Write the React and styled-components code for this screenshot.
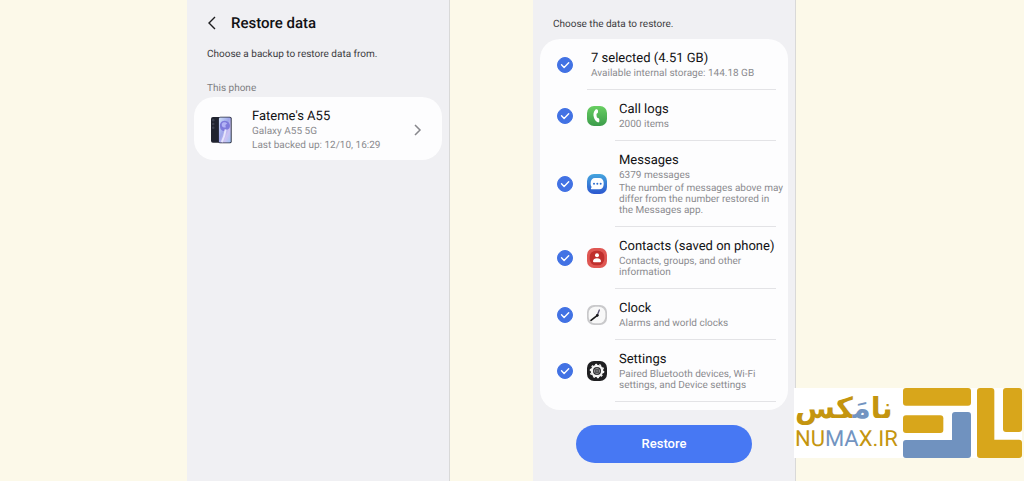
import React from "react";
import styled, { createGlobalStyle } from "styled-components";

const GlobalStyle = createGlobalStyle`
  * {
    box-sizing: border-box;
    margin: 0;
    padding: 0;
  }

  body {
    background-color: #fcf9e9;
    font-family: Roboto, "Liberation Sans", sans-serif;
    text-rendering: geometricPrecision;
    color: #111113;
  }
`;

const Page = styled.main`
  position: relative;
  min-height: 100vh;
  display: grid;
  grid-template-columns: 187fr 263fr 83fr 263fr 228fr;
`;

const Phone = styled.section`
  grid-column: ${({ $column }) => $column};
  display: flex;
  flex-direction: column;
  padding: ${({ $top }) => $top}px 7px 18px;
  background-color: #f0f0f3;
  border-right: 1px solid #d9d9d8;
`;

const TitleBar = styled.header`
  display: flex;
  align-items: center;
  gap: 14px;
  padding-left: 13px;

  h1 {
    font-size: 15px;
    line-height: 20px;
    font-weight: 500;
  }
`;

const BackButton = styled.button`
  display: flex;
  border: none;
  background: none;
  cursor: pointer;
`;

const Intro = styled.p`
  padding-left: 13px;
  margin-top: ${({ $gap }) => $gap || 0}px;
  font-size: 10px;
  line-height: 14px;
  color: #3b3b3e;
`;

const GroupLabel = styled.h2`
  padding-left: 13px;
  margin: 20px 0 1px;
  font-size: 10px;
  line-height: 14px;
  font-weight: 400;
  color: #7e7e82;
`;

const Card = styled.div`
  border-radius: 20px;
  background-color: #fdfdfe;
`;

const BackupLink = styled.a`
  display: flex;
  align-items: center;
  padding: 11px 20px 8px 17px;
  color: inherit;
  text-decoration: none;
`;

const BackupText = styled.div`
  flex: 1;
  padding-left: 20px;
`;

const ItemTitle = styled.span`
  display: block;
  font-size: 13px;
  line-height: 18px;
  color: #111113;
`;

const ItemNote = styled.span`
  display: block;
  margin-right: -8px;
  font-size: 10px;
  line-height: ${({ $loose }) => ($loose ? 12 : 11)}px;
  color: #8b8b8f;

  & + & {
    margin-top: 2px;
  }
`;

const DataCard = styled(Card)`
  margin-top: 7px;
  padding: 0 12px 8px 17px;
`;

const DataList = styled.ul`
  list-style: none;
`;

const DataRow = styled.label`
  display: flex;
  align-items: center;
  cursor: pointer;
`;

const CheckBox = styled.span`
  flex: none;
  display: grid;
  width: 16px;
  height: 16px;
  margin-right: 14px;

  input,
  svg {
    grid-area: 1 / 1;
    width: 100%;
    height: 100%;
  }

  input {
    appearance: none;
    border: 1px solid #9a9aa0;
    border-radius: 50%;
    cursor: pointer;
  }

  input:checked {
    border-color: #4272e4;
    background-color: #4272e4;
  }

  svg {
    pointer-events: none;
  }

  input:not(:checked) + svg {
    display: none;
  }
`;

const AppIcon = styled.svg`
  flex: none;
  width: 20px;
  height: 20px;
  margin-right: 8px;
`;

const DataText = styled.span`
  flex: 1;
  min-width: 0;
  padding: 11px 0 10px 4px;
  border-bottom: 1px solid #e3e3e6;
`;

const RestoreButton = styled.button`
  align-self: center;
  width: 71%;
  margin-top: 15px;
  border: none;
  border-radius: 19px;
  background-color: #4778f3;
  color: #ffffff;
  font-family: inherit;
  font-size: 13px;
  font-weight: 500;
  line-height: 38px;
  cursor: pointer;
`;

// sits over the corner of the page
const Brand = styled.a`
  position: absolute;
  right: 2px;
  bottom: 23px;
  display: flex;
  align-items: center;
  gap: 7px;
  padding-left: 1px;
  background-color: #ffffff;
  color: #c4950f;
  text-decoration: none;

  svg {
    width: 119px;
    height: 70px;
  }
`;

const BrandName = styled.span`
  display: flex;
  flex-direction: column;
  align-items: flex-start;
  width: 101px;
`;

const PersianName = styled.span`
  font-family: "DejaVu Sans", sans-serif;
  font-size: 29px;
  line-height: 34px;
  font-weight: 700;
`;

const LatinName = styled.span`
  font-family: Roboto, sans-serif;
  font-size: 22px;
  line-height: 30px;
`;

const Blue = styled.span`
  color: #7294c1;
`;

function CallIcon() {
  return (
    <AppIcon viewBox="0 0 60 60" aria-hidden="true">
      <defs>
        <linearGradient id="call" x1="0" y1="0" x2="0" y2="1">
          <stop offset="0" stopColor="#68cf62" />
          <stop offset="1" stopColor="#3c9c4b" />
        </linearGradient>
      </defs>
      <rect width="60" height="60" rx="21" fill="url(#call)" />
      <path
        d="M25 11c-6 6-7 15-4 24 2 6 6 11 11 14 2 1 5 0 5-3v-5c0-2-1-4-4-5-3-1-4-3-4-6-1-3-1-5 0-7 3-1 4-3 4-5v-4c0-4-5-6-8-3z"
        fill="#fff"
      />
    </AppIcon>
  );
}

function MessagesIcon() {
  return (
    <AppIcon viewBox="0 0 60 60" aria-hidden="true">
      <defs>
        <linearGradient id="messages" x1="0" y1="0" x2="0" y2="1">
          <stop offset="0" stopColor="#45a5de" />
          <stop offset="1" stopColor="#2c57cf" />
        </linearGradient>
      </defs>
      <rect width="60" height="60" rx="21" fill="url(#messages)" />
      <path
        d="M24 12h13c8 0 13 6 13 15v4c0 9-5 15-13 15H14c-2 0-3-2-2-3l2-4c-2-2-3-5-3-8v-4c0-9 5-15 13-15z"
        fill="#fff"
      />
      <g fill="#2f6fcf">
        <circle cx="21" cy="29" r="3" />
        <circle cx="31" cy="29" r="3" />
        <circle cx="41" cy="29" r="3" />
      </g>
    </AppIcon>
  );
}

function ContactsIcon() {
  return (
    <AppIcon viewBox="0 0 60 60" aria-hidden="true">
      <rect width="60" height="60" rx="21" fill="#df5753" />
      <rect x="8" y="8" width="44" height="44" rx="19" fill="#c02f2d" />
      <circle cx="30" cy="22" r="6" fill="#fff" />
      <path d="M18 40c0-6 5-9 12-9s12 3 12 9c0 2-2 3-4 3H22c-2 0-4-1-4-3z" fill="#fff" />
    </AppIcon>
  );
}

function ClockIcon() {
  return (
    <AppIcon viewBox="0 0 60 60" aria-hidden="true">
      <rect width="60" height="60" rx="21" fill="#c9c9cb" />
      <rect x="5" y="5" width="50" height="50" rx="20" fill="#f8f8f8" />
      <path d="M30 33 37 15" stroke="#55506f" strokeWidth="4" strokeLinecap="round" />
      <path d="M12 46 31 31" stroke="#161618" strokeWidth="5" strokeLinecap="round" />
      <circle cx="31" cy="31" r="4" fill="#161618" />
    </AppIcon>
  );
}

function SettingsIcon() {
  return (
    <AppIcon viewBox="0 0 60 60" aria-hidden="true">
      <rect width="60" height="60" rx="21" fill="#1f1f21" />
      <circle cx="30" cy="30" r="19" fill="#f5f5f5" />
      <circle
        cx="30"
        cy="30"
        r="20"
        fill="none"
        stroke="#f5f5f5"
        strokeWidth="4"
        strokeDasharray="6 6.56"
      />
      <circle cx="30" cy="30" r="12" fill="#29292b" />
      <circle cx="30" cy="30" r="8" fill="none" stroke="#a5a5a8" strokeWidth="2" />
      <path d="M30 20v20M20 30h20" stroke="#a5a5a8" strokeWidth="2" />
    </AppIcon>
  );
}

function PhonePicture() {
  return (
    <svg width="21" height="28" viewBox="0 0 66 84" aria-hidden="true">
      <defs>
        <linearGradient id="screen" x1="0" y1="0" x2="1" y2="1">
          <stop offset="0" stopColor="#cfe0fa" />
          <stop offset="0.45" stopColor="#9ea6ea" />
          <stop offset="0.7" stopColor="#cdc2f3" />
          <stop offset="1" stopColor="#9fc4f4" />
        </linearGradient>
      </defs>
      <rect x="0" y="1" width="36" height="81" rx="6" fill="#20232f" />
      <circle cx="7" cy="11" r="4" fill="#3b3f4e" />
      <circle cx="7" cy="23" r="4" fill="#3b3f4e" />
      <circle cx="7" cy="35" r="4" fill="#3b3f4e" />
      <rect x="23" y="0" width="42" height="84" rx="6" fill="#272b3e" />
      <rect x="25" y="3" width="37" height="78" rx="4" fill="url(#screen)" />
      <path d="M30 20c6-10 22-9 28 2 4 9 0 18-9 19-7 8-19 3-20-6-1-6-2-10 1-15z" fill="#7f7bdc" />
      <path d="M34 22c5-6 14-5 17 1-6 0-7 5-4 10-8 4-15-2-13-11z" fill="#b3b3f5" />
      <path d="M46 40c-2 14-5 26-12 40" stroke="#e6e5fb" strokeWidth="6" fill="none" />
    </svg>
  );
}

function BrandMark() {
  return (
    <svg viewBox="0 0 357 210" aria-hidden="true">
      <g fill="#d8a61b">
        <rect width="204" height="53" rx="9" />
        <rect y="82" width="121" height="53" rx="9" />
        <path d="M231 0h34q9 0 9 9v146h74q9 0 9 9v37q0 9-9 9H231q-9 0-9-9V9q0-9 9-9z" />
        <rect x="300" width="57" height="132" rx="9" />
      </g>
      <path
        d="M156 72h39q9 0 9 9v120q0 9-9 9H9q-9 0-9-9v-36q0-9 9-9h138V81q0-9 9-9z"
        fill="#7092bf"
      />
    </svg>
  );
}

const items = [
  { title: "7 selected (4.51 GB)", notes: ["Available internal storage: 144.18 GB"] },
  { title: "Call logs", notes: ["2000 items"], Icon: CallIcon },
  {
    title: "Messages",
    notes: [
      "6379 messages",
      "The number of messages above may differ from the number restored in the Messages app.",
    ],
    Icon: MessagesIcon,
  },
  {
    title: "Contacts (saved on phone)",
    notes: ["Contacts, groups, and other information"],
    Icon: ContactsIcon,
  },
  { title: "Clock", notes: ["Alarms and world clocks"], Icon: ClockIcon },
  {
    title: "Settings",
    notes: ["Paired Bluetooth devices, Wi-Fi settings, and Device settings"],
    Icon: SettingsIcon,
  },
];

export default function App() {
  return (
    <>
      <GlobalStyle />
      <Page>
        <Phone $column={2} $top={13}>
          <TitleBar>
            <BackButton type="button" aria-label="Back">
              <svg width="10" height="14" viewBox="0 0 10 14" fill="none">
                <path d="M8 1 2 7l6 6" stroke="#1c1c1e" strokeWidth="1.4" />
              </svg>
            </BackButton>
            <h1>Restore data</h1>
          </TitleBar>
          <Intro $gap={15}>Choose a backup to restore data from.</Intro>
          <GroupLabel>This phone</GroupLabel>
          <Card>
            <BackupLink href="#backup">
              <PhonePicture />
              <BackupText>
                <ItemTitle>Fateme's A55</ItemTitle>
                <ItemNote $loose>Galaxy A55 5G</ItemNote>
                <ItemNote $loose>Last backed up: 12/10, 16:29</ItemNote>
              </BackupText>
              <svg width="8" height="12" viewBox="0 0 8 12" fill="none" aria-hidden="true">
                <path d="m1 1 5 5-5 5" stroke="#87878b" strokeWidth="1.5" />
              </svg>
            </BackupLink>
          </Card>
        </Phone>

        <Phone $column={4} $top={18}>
          <Intro>Choose the data to restore.</Intro>
          <DataCard>
            <DataList>
              {items.map(({ title, notes, Icon }) => (
                <li key={title}>
                  <DataRow>
                    <CheckBox>
                      <input type="checkbox" defaultChecked />
                      <svg viewBox="0 0 16 16" fill="none" aria-hidden="true">
                        <path
                          d="m4.5 7.8 2.6 2.6 4.6-4.6"
                          stroke="#fff"
                          strokeWidth="1.4"
                          strokeLinecap="round"
                          strokeLinejoin="round"
                        />
                      </svg>
                    </CheckBox>
                    {Icon && <Icon />}
                    <DataText>
                      <ItemTitle>{title}</ItemTitle>
                      {notes.map((note) => (
                        <ItemNote key={note}>{note}</ItemNote>
                      ))}
                    </DataText>
                  </DataRow>
                </li>
              ))}
            </DataList>
          </DataCard>
          <RestoreButton type="button">Restore</RestoreButton>
        </Phone>

        <Brand href="#numax">
          <BrandName>
            <PersianName lang="fa" dir="rtl">
              نا<Blue>مَ</Blue>کس
            </PersianName>
            <LatinName>
              NU<Blue>MA</Blue>X.IR
            </LatinName>
          </BrandName>
          <BrandMark />
        </Brand>
      </Page>
    </>
  );
}
